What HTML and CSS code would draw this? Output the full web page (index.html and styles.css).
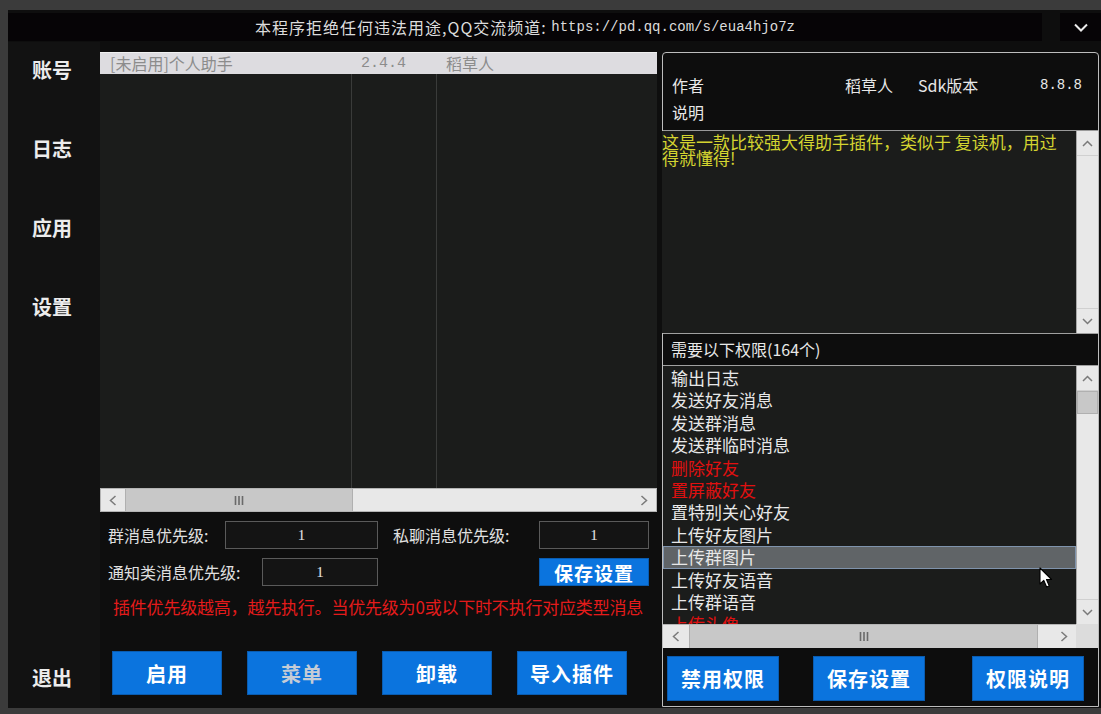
FILE: index.html
```html
<!DOCTYPE html>
<html lang="zh-CN">
<head>
<meta charset="utf-8">
<title>插件管理</title>
<link rel="stylesheet" href="styles.css">
</head>
<body>
<div class="window">
  <div class="topbar">
    <div class="title">本程序拒绝任何违法用途,QQ交流频道: <span class="url">https://pd.qq.com/s/eua4hjo7z</span></div>
    <div class="drop"><svg width="14" height="9" viewBox="0 0 14 9"><polyline points="1,1.5 7,7.5 13,1.5" fill="none" stroke="#ececec" stroke-width="2"/></svg></div>
  </div>
  <div class="main">
    <nav class="side">
      <div class="nav">账号</div>
      <div class="nav">日志</div>
      <div class="nav">应用</div>
      <div class="nav">设置</div>
      <div class="nav exit">退出</div>
    </nav>
    <section class="center">
      <div class="lhead"><span class="c1">[未启用]个人助手</span><span class="c2 mono">2.4.4</span><span class="c3">稻草人</span></div>
      <div class="lbody"><div class="c1"></div><div class="c2"></div><div class="c3"></div></div>
      <div class="hscroll">
        <div class="sbtn"><svg width="8" height="11" viewBox="0 0 8 11"><polyline points="6.5,1 1.5,5.5 6.5,10" fill="none" stroke="#7a7a7a" stroke-width="1.5"/></svg></div>
        <div class="hthumb lthumb"><svg width="10" height="9" viewBox="0 0 10 9"><path d="M1.5 0V9M5 0V9M8.5 0V9" stroke="#6a6a6a" stroke-width="1.6"/></svg></div>
        <div class="track"></div>
        <div class="sbtn"><svg width="8" height="11" viewBox="0 0 8 11"><polyline points="1.5,1 6.5,5.5 1.5,10" fill="none" stroke="#7a7a7a" stroke-width="1.5"/></svg></div>
      </div>
      <div class="frow">
        <span class="lab w1">群消息优先级:</span>
        <div class="inp i1">1</div>
        <span class="lab w2">私聊消息优先级:</span>
        <div class="inp i2">1</div>
      </div>
      <div class="frow">
        <span class="lab w3">通知类消息优先级:</span>
        <div class="inp i3">1</div>
        <div class="btn small">保存设置</div>
      </div>
      <div class="note">插件优先级越高，越先执行。当优先级为0或以下时不执行对应类型消息</div>
      <div class="bbtns">
        <div class="btn big">启用</div>
        <div class="btn big dim">菜单</div>
        <div class="btn big">卸载</div>
        <div class="btn big">导入插件</div>
      </div>
    </section>
    <section class="right">
      <div class="info">
        <div class="irow"><span class="f1">作者</span><span class="f2">稻草人</span><span class="f3">Sdk版本</span><span class="f4 mono">8.8.8</span></div>
        <div class="irow"><span>说明</span></div>
      </div>
      <div class="desc">
        <div class="dtext">这是一款比较强大得助手插件，类似于 复读机，用过<br>得就懂得!</div>
        <div class="vs">
          <div class="vbtn up"><svg width="11" height="7" viewBox="0 0 11 7"><polyline points="1,6 5.5,1.5 10,6" fill="none" stroke="#7a7a7a" stroke-width="1.5"/></svg></div>
          <div class="track"></div>
          <div class="vbtn down"><svg width="11" height="7" viewBox="0 0 11 7"><polyline points="1,1 5.5,5.5 10,1" fill="none" stroke="#7a7a7a" stroke-width="1.5"/></svg></div>
        </div>
      </div>
      <div class="phead">需要以下权限(164个)</div>
      <div class="plist">
        <div class="pitems">
          <div class="pi">输出日志</div>
          <div class="pi">发送好友消息</div>
          <div class="pi">发送群消息</div>
          <div class="pi">发送群临时消息</div>
          <div class="pi red">删除好友</div>
          <div class="pi red">置屏蔽好友</div>
          <div class="pi">置特别关心好友</div>
          <div class="pi">上传好友图片</div>
          <div class="pi sel">上传群图片</div>
          <div class="pi">上传好友语音</div>
          <div class="pi">上传群语音</div>
          <div class="pi red">上传头像</div>
        </div>
        <div class="vs">
          <div class="vbtn up"><svg width="11" height="7" viewBox="0 0 11 7"><polyline points="1,6 5.5,1.5 10,6" fill="none" stroke="#7a7a7a" stroke-width="1.5"/></svg></div>
          <div class="vthumb"></div>
          <div class="track"></div>
          <div class="vbtn down"><svg width="11" height="7" viewBox="0 0 11 7"><polyline points="1,1 5.5,5.5 10,1" fill="none" stroke="#7a7a7a" stroke-width="1.5"/></svg></div>
        </div>
      </div>
      <div class="phs">
        <div class="hscroll pbar">
          <div class="sbtn wide"><svg width="8" height="11" viewBox="0 0 8 11"><polyline points="6.5,1 1.5,5.5 6.5,10" fill="none" stroke="#7a7a7a" stroke-width="1.5"/></svg></div>
          <div class="hthumb rthumb"><svg width="10" height="9" viewBox="0 0 10 9"><path d="M1.5 0V9M5 0V9M8.5 0V9" stroke="#6a6a6a" stroke-width="1.6"/></svg></div>
          <div class="track"></div>
          <div class="sbtn"><svg width="8" height="11" viewBox="0 0 8 11"><polyline points="1.5,1 6.5,5.5 1.5,10" fill="none" stroke="#7a7a7a" stroke-width="1.5"/></svg></div>
        </div>
        <div class="corner"></div>
      </div>
      <div class="pbtns">
        <div class="btn pb">禁用权限</div>
        <div class="btn pb m2">保存设置</div>
        <div class="btn pb m3">权限说明</div>
      </div>
    </section>
  </div>
</div>
<svg class="cursor" width="14" height="22" viewBox="0 0 14 22"><path d="M1 1 L1 17 L4.8 13.4 L7.6 20 L10.2 18.9 L7.5 12.5 L12.6 12.5 Z" fill="#ffffff" stroke="#000000" stroke-width="1.1" stroke-linejoin="round"/></svg>
</body>
</html>
```

FILE: styles.css
```css
* { box-sizing: border-box; margin: 0; padding: 0; }
html, body { width: 1101px; height: 714px; overflow: hidden; }
body {
  background: #3b3b3b;
  padding: 10px 0 0 8px;
  font-family: "Noto Sans CJK SC", "Noto Sans", sans-serif;
  color: #e6e6e6;
  position: relative;
}
.mono { font-family: "Liberation Mono", monospace; }

.window {
  width: 1093px;
  height: 698px;
  background: #0e0e0e;
  display: flex;
  flex-direction: column;
}
.topbar { height: 32px; padding-top: 3px; display: flex; gap: 18px; }
.title {
  width: 1034px; height: 28px; background: #060406;
  display: flex; align-items: center; justify-content: center;
  font-size: 16px; letter-spacing: 1px; color: #dcdcdc; white-space: pre;
}
.url { font-family: "Liberation Mono", monospace; font-size: 14px; letter-spacing: 0; }
.drop { flex: 1; height: 28px; background: #060406; display: flex; align-items: center; justify-content: center; }

.main { flex: 1; display: flex; }
.side {
  width: 92px; background: #121212;
  display: flex; flex-direction: column;
  padding: 14px 0 16px 24px; gap: 51px;
}
.nav { font-size: 20px; font-weight: 700; line-height: 28px; height: 28px; color: #ececec; }
.exit { margin-top: auto; }

.center { width: 557px; padding-top: 10px; display: flex; flex-direction: column; }
.lhead {
  height: 22px; background: #dddce0; display: flex;
  font-size: 16px; color: #8c8c8c; line-height: 21px;
  border-top: 1px solid #f0f0f0;
}
.c1 { width: 252px; padding-left: 10px; }
.c2 { width: 85px; padding-left: 9px; }
.c3 { flex: 1; padding-left: 9px; }
.lhead .mono { font-size: 15px; }
.lbody { height: 414px; background: #1b1c1b; display: flex; }
.lbody .c1, .lbody .c2 { border-right: 1px solid #3a3b3a; }

.hscroll { height: 24px; background: #e8e8e8; display: flex; border: 1px solid #b4b4b4; }
.sbtn { width: 24px; display: flex; align-items: center; justify-content: center; }
.sbtn.wide { width: 26px; }
.hthumb {
  background: #c8c8c8; border-left: 1px solid #b0b0b0; border-right: 1px solid #b0b0b0;
  display: flex; align-items: center; justify-content: center;
}
.lthumb { width: 228px; }
.rthumb { width: 349px; }
.track { flex: 1; }

.frow { display: flex; align-items: center; height: 28px; margin-top: 9px; padding-left: 8px; font-size: 16px; color: #e0e0e0; }
.lab { white-space: nowrap; }
.w1 { width: 117px; }
.w2 { width: 146px; margin-left: 15px; }
.w3 { width: 154px; }
.inp {
  height: 28px; background: #141414; border: 1px solid #5a5a5a;
  display: flex; align-items: center; justify-content: center;
  font-family: "Liberation Serif", serif; font-size: 15px; color: #e4e4e4;
}
.i1 { width: 153px; }
.i2 { width: 110px; }
.i3 { width: 116px; }

.btn {
  background: #0b74de; border: 1px solid #0a5cb0;
  color: #ffffff; font-weight: 700;
  display: flex; align-items: center; justify-content: center;
}
.small { width: 110px; height: 28px; margin-left: 161px; font-size: 19px; letter-spacing: 1px; }
.note { margin-top: 11px; padding-left: 13px; font-size: 17px; line-height: 20px; color: #e41b1b; white-space: nowrap; letter-spacing: -0.2px; }
.bbtns { display: flex; gap: 25px; padding-left: 12px; margin-top: 34px; }
.big { width: 110px; height: 44px; font-size: 20px; letter-spacing: 1px; }
.dim { color: #c4ccd6; }

.right {
  margin: 10px 0 0 5px; width: 437px; height: 655px;
  border: 1px solid #bdbdbd; border-radius: 4px 4px 0 0;
  display: flex; flex-direction: column; background: #0d0d0d;
}
.info { height: 77px; padding: 19px 0 0 9px; font-size: 16px; line-height: 27px; color: #e8e8e8; }
.irow { display: flex; white-space: nowrap; }
.f1 { width: 173px; }
.f2 { width: 73px; }
.f3 { width: 122px; }
.f4 { font-size: 14px; }

.desc { height: 203px; display: flex; border-top: 1px solid #9a9a9a; }
.dtext {
  flex: 1; background: #1b1c1b; color: #d4d430;
  font-size: 17px; line-height: 16px; padding-top: 3px; margin-left: -1px; white-space: nowrap;
}
.vs { width: 22px; background: #e8e8e8; border-left: 1px solid #a8a8a8; display: flex; flex-direction: column; }
.vbtn { height: 25px; display: flex; align-items: center; justify-content: center; }
.vbtn.up { border-bottom: 1px solid #d0d0d0; }
.vbtn.down { border-top: 1px solid #d0d0d0; }
.vthumb { height: 23px; background: #c8c8c8; border: 1px solid #b0b0b0; }

.phead {
  height: 33px; border-top: 1px solid #a0a0a0; border-bottom: 1px solid #a0a0a0;
  background: #0d0d0d; padding-left: 8px; font-size: 16px; line-height: 31px; color: #e8e8e8;
}
.plist { height: 258px; display: flex; }
.pitems { flex: 1; background: #1b1c1b; font-size: 17px; line-height: 22.4px; padding-top: 1px; overflow: hidden; color: #e8e8e8; }
.pi { padding-left: 8px; height: 22.4px; white-space: nowrap; }
.red { color: #e01010; }
.sel { background: #606467; border: 1px solid #7f93ac; line-height: 20.4px; padding-left: 7px; }

.phs { height: 24px; display: flex; }
.pbar { flex: 1; border: none; border-top: 1px solid #b4b4b4; }
.corner { width: 22px; background: #dcdcdc; }

.pbtns { flex: 1; display: flex; padding: 8px 0 0 4px; }
.pb { width: 112px; height: 45px; font-size: 20px; letter-spacing: 1px; }
.m2 { margin-left: 34px; }
.m3 { margin-left: 47px; }

.cursor { position: absolute; left: 1039px; top: 567px; }
```
